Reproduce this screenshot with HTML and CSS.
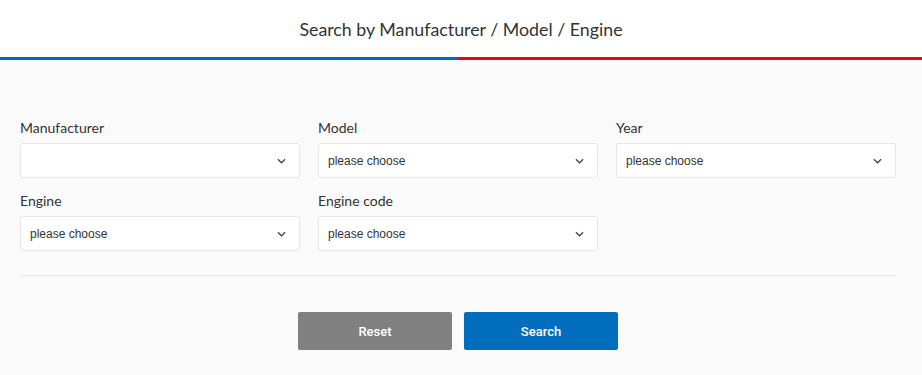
FILE: index.html
```html
<!DOCTYPE html>
<html lang="en">
<head>
	<meta charset="utf-8" />
	<title>Vehicle search</title>
	<link rel="stylesheet" href="styles.css">
</head>
<body>
	<div class="search">
		<div class="header">
			<h2 class="title">Search by Manufacturer / Model / Engine</h2>
		</div>
		<div class="bar"><span class="blue"></span><span class="red"></span></div>
		<form class="form">
			<div class="fields">
				<div class="field">
					<label for="manufacturer">Manufacturer</label>
					<div class="select"><span id="manufacturer"></span><svg class="chevron" viewBox="0 0 10 6"><path d="M1 1l4 4 4-4"/></svg></div>
				</div>
				<div class="field">
					<label for="model">Model</label>
					<div class="select"><span id="model">please choose</span><svg class="chevron" viewBox="0 0 10 6"><path d="M1 1l4 4 4-4"/></svg></div>
				</div>
				<div class="field">
					<label for="year">Year</label>
					<div class="select"><span id="year">please choose</span><svg class="chevron" viewBox="0 0 10 6"><path d="M1 1l4 4 4-4"/></svg></div>
				</div>
				<div class="field">
					<label for="engine">Engine</label>
					<div class="select"><span id="engine">please choose</span><svg class="chevron" viewBox="0 0 10 6"><path d="M1 1l4 4 4-4"/></svg></div>
				</div>
				<div class="field">
					<label for="engineCode">Engine code</label>
					<div class="select"><span id="engineCode">please choose</span><svg class="chevron" viewBox="0 0 10 6"><path d="M1 1l4 4 4-4"/></svg></div>
				</div>
			</div>
			<hr class="divider" />
			<div class="buttons">
				<button type="reset" class="btn reset">Reset</button>
				<button type="button" class="btn submit">Search</button>
			</div>
		</form>
	</div>
</body>
</html>
```

FILE: styles.css
```css
html {
	box-sizing: border-box;
	font-family: Lato, "Open Sans", sans-serif;
	color: #333;
}

*, *:before, *:after {
	box-sizing: inherit;
}

body {
	margin: 0;
	padding: 0;
	background-color: #fafafa;
}

.header {
	background-color: #fff;
	height: 57px;
	display: flex;
	align-items: center;
	justify-content: center;
}

.title {
	margin: 0;
	font-size: 17.8px;
	font-weight: 400;
	color: #333;
}

.bar {
	display: flex;
	height: 3px;
}

.bar .blue {
	width: 458px;
	background-color: #006cb8;
}

.bar .red {
	flex: 1;
	background-color: #e30613;
}

.form {
	padding: 58px 26px 25px 20px;
}

.fields {
	display: grid;
	grid-template-columns: repeat(3, 1fr);
	column-gap: 18px;
	row-gap: 13px;
}

.field label {
	display: block;
	font-size: 14px;
	line-height: 20px;
	margin-bottom: 5px;
	color: #333;
}

.select {
	display: flex;
	align-items: center;
	justify-content: space-between;
	height: 35px;
	padding: 0 13px 0 9px;
	background-color: #fff;
	border: 1px solid #e6e6e6;
	border-radius: 3px;
	font-family: "Liberation Sans", Arial, sans-serif;
	font-size: 12px;
	color: #333;
}

.chevron {
	width: 9px;
	height: 6px;
	fill: none;
	stroke: #444;
	stroke-width: 1.4;
}

.divider {
	margin: 24px 0 36px;
	border: 0;
	border-top: 1px solid #e6e6e6;
}

.buttons {
	display: flex;
	justify-content: center;
	gap: 12px;
}

.btn {
	width: 154px;
	height: 38px;
	border: 0;
	border-radius: 2px;
	color: #fff;
	font-family: Roboto, sans-serif;
	font-size: 13px;
	font-weight: 500;
	cursor: pointer;
}

.reset {
	background-color: #808080;
}

.submit {
	background-color: #006ebc;
}
```
